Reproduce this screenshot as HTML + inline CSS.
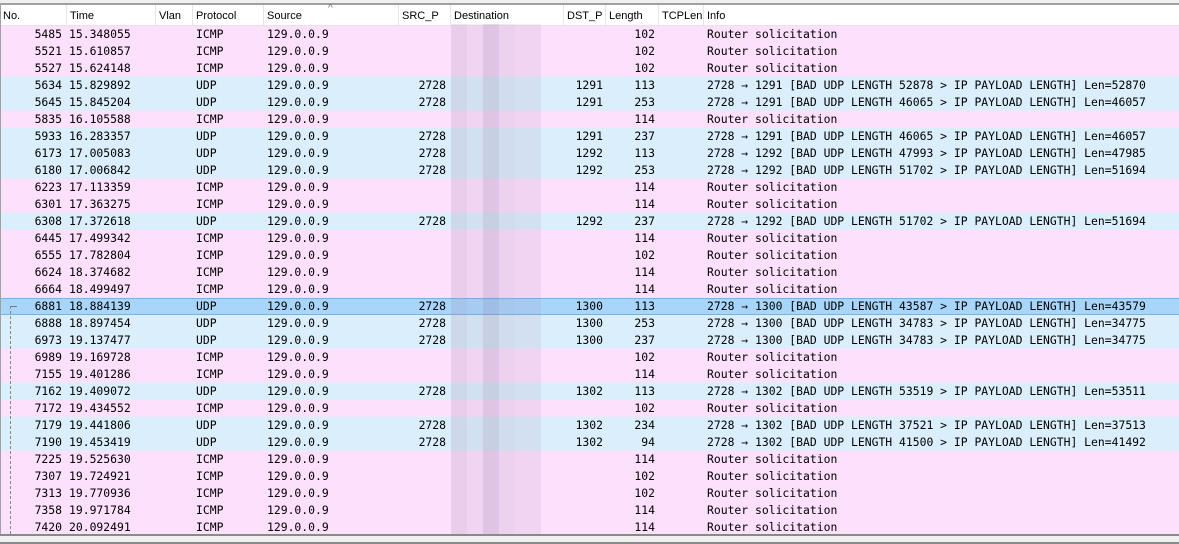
<!DOCTYPE html><html><head><meta charset="utf-8"><style>
body{margin:0;width:1179px;height:544px;background:#f0f0f0;position:relative;overflow:hidden;font-family:"DejaVu Sans Mono","Liberation Mono",monospace;font-size:11.4px;color:#000}
.top{position:absolute;left:0;top:0;width:1179px;height:3px;background:#f0f0f0;border-bottom:2px solid #a0a0a0}
.hd{position:absolute;left:0;top:5px;width:1179px;height:20px;background:#fff;border-bottom:1px solid #e5e5e5;font-family:"Liberation Sans",sans-serif;font-size:11px}
.hd span{position:absolute;padding-left:3px;border-left:1px solid #e5e5e5;height:20px;top:0;line-height:22px}
.r{position:absolute;left:0;width:1179px;height:17px;line-height:17px;white-space:pre}
.i{background:#fce0fc}.u{background:#daeefc}
.s{background:#a8d6fb;box-shadow:inset 0 1px 0 #70b4ee,inset 0 -1px 0 #70b4ee}
.r span{position:absolute;top:0}
.n{right:1117px}.t{left:69px}.p{left:196px}.src{left:267px}.sp{right:733px}.dp{right:576px}.l{right:524px}.inf{left:707px}
.bl{position:absolute;top:24px;height:510px}
.bot{position:absolute;left:0;top:534px;width:1179px;height:6px;border-top:2px solid #8a8a8a;border-bottom:2px solid #8a8a8a;background:#f0f0f0}
</style></head><body>
<div class="top"></div>
<div class="hd">
<span style="left:0;border:0">No.</span><span style="left:66px">Time</span><span style="left:155px">Vlan</span><span style="left:192px">Protocol</span><span style="left:263px">Source</span><span style="left:325px;border:0;top:-7px;font-size:10px;color:#666">^</span><span style="left:398px">SRC_P</span><span style="left:450px">Destination</span><span style="left:563px">DST_P</span><span style="left:605px">Length</span><span style="left:658px">TCPLen</span><span style="left:703px">Info</span>
</div>
<div class="r i" style="top:26px"><span class="n">5485</span><span class="t">15.348055</span><span class="p">ICMP</span><span class="src">129.0.0.9</span><span class="l">102</span><span class="inf">Router solicitation</span></div>
<div class="r i" style="top:43px"><span class="n">5521</span><span class="t">15.610857</span><span class="p">ICMP</span><span class="src">129.0.0.9</span><span class="l">102</span><span class="inf">Router solicitation</span></div>
<div class="r i" style="top:60px"><span class="n">5527</span><span class="t">15.624148</span><span class="p">ICMP</span><span class="src">129.0.0.9</span><span class="l">102</span><span class="inf">Router solicitation</span></div>
<div class="r u" style="top:77px"><span class="n">5634</span><span class="t">15.829892</span><span class="p">UDP</span><span class="src">129.0.0.9</span><span class="sp">2728</span><span class="dp">1291</span><span class="l">113</span><span class="inf">2728 → 1291 [BAD UDP LENGTH 52878 > IP PAYLOAD LENGTH] Len=52870</span></div>
<div class="r u" style="top:94px"><span class="n">5645</span><span class="t">15.845204</span><span class="p">UDP</span><span class="src">129.0.0.9</span><span class="sp">2728</span><span class="dp">1291</span><span class="l">253</span><span class="inf">2728 → 1291 [BAD UDP LENGTH 46065 > IP PAYLOAD LENGTH] Len=46057</span></div>
<div class="r i" style="top:111px"><span class="n">5835</span><span class="t">16.105588</span><span class="p">ICMP</span><span class="src">129.0.0.9</span><span class="l">114</span><span class="inf">Router solicitation</span></div>
<div class="r u" style="top:128px"><span class="n">5933</span><span class="t">16.283357</span><span class="p">UDP</span><span class="src">129.0.0.9</span><span class="sp">2728</span><span class="dp">1291</span><span class="l">237</span><span class="inf">2728 → 1291 [BAD UDP LENGTH 46065 > IP PAYLOAD LENGTH] Len=46057</span></div>
<div class="r u" style="top:145px"><span class="n">6173</span><span class="t">17.005083</span><span class="p">UDP</span><span class="src">129.0.0.9</span><span class="sp">2728</span><span class="dp">1292</span><span class="l">113</span><span class="inf">2728 → 1292 [BAD UDP LENGTH 47993 > IP PAYLOAD LENGTH] Len=47985</span></div>
<div class="r u" style="top:162px"><span class="n">6180</span><span class="t">17.006842</span><span class="p">UDP</span><span class="src">129.0.0.9</span><span class="sp">2728</span><span class="dp">1292</span><span class="l">253</span><span class="inf">2728 → 1292 [BAD UDP LENGTH 51702 > IP PAYLOAD LENGTH] Len=51694</span></div>
<div class="r i" style="top:179px"><span class="n">6223</span><span class="t">17.113359</span><span class="p">ICMP</span><span class="src">129.0.0.9</span><span class="l">114</span><span class="inf">Router solicitation</span></div>
<div class="r i" style="top:196px"><span class="n">6301</span><span class="t">17.363275</span><span class="p">ICMP</span><span class="src">129.0.0.9</span><span class="l">114</span><span class="inf">Router solicitation</span></div>
<div class="r u" style="top:213px"><span class="n">6308</span><span class="t">17.372618</span><span class="p">UDP</span><span class="src">129.0.0.9</span><span class="sp">2728</span><span class="dp">1292</span><span class="l">237</span><span class="inf">2728 → 1292 [BAD UDP LENGTH 51702 > IP PAYLOAD LENGTH] Len=51694</span></div>
<div class="r i" style="top:230px"><span class="n">6445</span><span class="t">17.499342</span><span class="p">ICMP</span><span class="src">129.0.0.9</span><span class="l">114</span><span class="inf">Router solicitation</span></div>
<div class="r i" style="top:247px"><span class="n">6555</span><span class="t">17.782804</span><span class="p">ICMP</span><span class="src">129.0.0.9</span><span class="l">102</span><span class="inf">Router solicitation</span></div>
<div class="r i" style="top:264px"><span class="n">6624</span><span class="t">18.374682</span><span class="p">ICMP</span><span class="src">129.0.0.9</span><span class="l">114</span><span class="inf">Router solicitation</span></div>
<div class="r i" style="top:281px"><span class="n">6664</span><span class="t">18.499497</span><span class="p">ICMP</span><span class="src">129.0.0.9</span><span class="l">114</span><span class="inf">Router solicitation</span></div>
<div class="r s" style="top:298px"><span class="n">6881</span><span class="t">18.884139</span><span class="p">UDP</span><span class="src">129.0.0.9</span><span class="sp">2728</span><span class="dp">1300</span><span class="l">113</span><span class="inf">2728 → 1300 [BAD UDP LENGTH 43587 > IP PAYLOAD LENGTH] Len=43579</span></div>
<div class="r u" style="top:315px"><span class="n">6888</span><span class="t">18.897454</span><span class="p">UDP</span><span class="src">129.0.0.9</span><span class="sp">2728</span><span class="dp">1300</span><span class="l">253</span><span class="inf">2728 → 1300 [BAD UDP LENGTH 34783 > IP PAYLOAD LENGTH] Len=34775</span></div>
<div class="r u" style="top:332px"><span class="n">6973</span><span class="t">19.137477</span><span class="p">UDP</span><span class="src">129.0.0.9</span><span class="sp">2728</span><span class="dp">1300</span><span class="l">237</span><span class="inf">2728 → 1300 [BAD UDP LENGTH 34783 > IP PAYLOAD LENGTH] Len=34775</span></div>
<div class="r i" style="top:349px"><span class="n">6989</span><span class="t">19.169728</span><span class="p">ICMP</span><span class="src">129.0.0.9</span><span class="l">102</span><span class="inf">Router solicitation</span></div>
<div class="r i" style="top:366px"><span class="n">7155</span><span class="t">19.401286</span><span class="p">ICMP</span><span class="src">129.0.0.9</span><span class="l">114</span><span class="inf">Router solicitation</span></div>
<div class="r u" style="top:383px"><span class="n">7162</span><span class="t">19.409072</span><span class="p">UDP</span><span class="src">129.0.0.9</span><span class="sp">2728</span><span class="dp">1302</span><span class="l">113</span><span class="inf">2728 → 1302 [BAD UDP LENGTH 53519 > IP PAYLOAD LENGTH] Len=53511</span></div>
<div class="r i" style="top:400px"><span class="n">7172</span><span class="t">19.434552</span><span class="p">ICMP</span><span class="src">129.0.0.9</span><span class="l">102</span><span class="inf">Router solicitation</span></div>
<div class="r u" style="top:417px"><span class="n">7179</span><span class="t">19.441806</span><span class="p">UDP</span><span class="src">129.0.0.9</span><span class="sp">2728</span><span class="dp">1302</span><span class="l">234</span><span class="inf">2728 → 1302 [BAD UDP LENGTH 37521 > IP PAYLOAD LENGTH] Len=37513</span></div>
<div class="r u" style="top:434px"><span class="n">7190</span><span class="t">19.453419</span><span class="p">UDP</span><span class="src">129.0.0.9</span><span class="sp">2728</span><span class="dp">1302</span><span class="l">94</span><span class="inf">2728 → 1302 [BAD UDP LENGTH 41500 > IP PAYLOAD LENGTH] Len=41492</span></div>
<div class="r i" style="top:451px"><span class="n">7225</span><span class="t">19.525630</span><span class="p">ICMP</span><span class="src">129.0.0.9</span><span class="l">114</span><span class="inf">Router solicitation</span></div>
<div class="r i" style="top:468px"><span class="n">7307</span><span class="t">19.724921</span><span class="p">ICMP</span><span class="src">129.0.0.9</span><span class="l">102</span><span class="inf">Router solicitation</span></div>
<div class="r i" style="top:485px"><span class="n">7313</span><span class="t">19.770936</span><span class="p">ICMP</span><span class="src">129.0.0.9</span><span class="l">102</span><span class="inf">Router solicitation</span></div>
<div class="r i" style="top:502px"><span class="n">7358</span><span class="t">19.971784</span><span class="p">ICMP</span><span class="src">129.0.0.9</span><span class="l">114</span><span class="inf">Router solicitation</span></div>
<div class="r i" style="top:519px"><span class="n">7420</span><span class="t">20.092491</span><span class="p">ICMP</span><span class="src">129.0.0.9</span><span class="l">114</span><span class="inf">Router solicitation</span></div>
<div class="bl" style="left:451px;width:16px;background:rgba(160,130,170,.2)"></div>
<div class="bl" style="left:467px;width:16px;background:rgba(160,130,170,.12)"></div>
<div class="bl" style="left:483px;width:16px;background:rgba(140,110,160,.24)"></div>
<div class="bl" style="left:499px;width:16px;background:rgba(160,130,170,.16)"></div>
<div class="bl" style="left:515px;width:26px;background:rgba(160,130,170,.13)"></div>
<div style="position:absolute;left:10px;top:306px;width:7px;height:1px;background:#777"></div>
<div style="position:absolute;left:10px;top:306px;width:0;height:228px;border-left:1px dashed #888"></div>
<div style="position:absolute;left:0;top:5px;width:1px;height:529px;background:#a0a0a0"></div>
<div class="bot"></div>
</body></html>
